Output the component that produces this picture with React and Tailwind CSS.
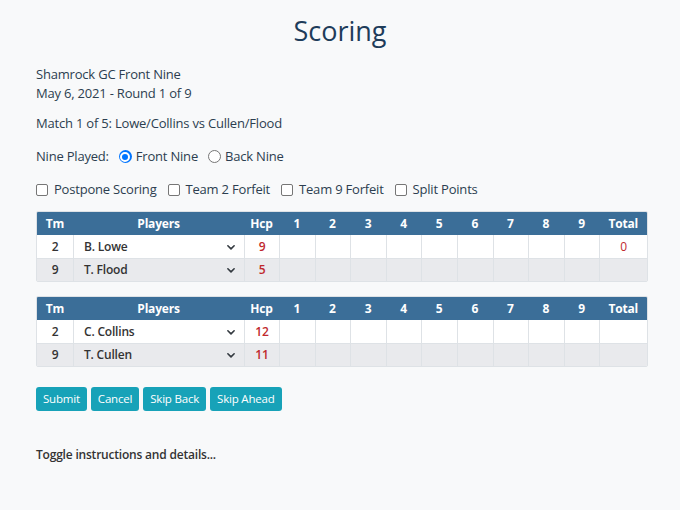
import React from 'react';

const holes = [1, 2, 3, 4, 5, 6, 7, 8, 9];

const matches = [
  [
    { tm: 2, name: 'B. Lowe', hcp: 9, total: '0' },
    { tm: 9, name: 'T. Flood', hcp: 5, total: '' },
  ],
  [
    { tm: 2, name: 'C. Collins', hcp: 12, total: '' },
    { tm: 9, name: 'T. Cullen', hcp: 11, total: '' },
  ],
];

const Chevron = () => (
  <svg width="10" height="10" viewBox="0 0 16 16" fill="none" stroke="#343a40" strokeWidth="2.6" strokeLinecap="round" strokeLinejoin="round">
    <path d="M3 6l5 5 5-5" />
  </svg>
);

const Checkbox = ({ label }) => (
  <label className="flex items-center gap-[6px]">
    <span className="w-[12px] h-[12px] rounded-[2px] border border-[#767676] bg-white" />
    <span>{label}</span>
  </label>
);

const Radio = ({ label, checked }) => (
  <label className="flex items-center gap-[4px]">
    {checked ? (
      <span className="w-[13px] h-[13px] rounded-full bg-[#0075ff] flex items-center justify-center">
        <span className="w-[10px] h-[10px] rounded-full bg-[#0075ff] border-[2px] border-white" />
      </span>
    ) : (
      <span className="w-[13px] h-[13px] rounded-full border border-[#767676] bg-white" />
    )}
    <span>{label}</span>
  </label>
);

const ScoreTable = ({ rows }) => (
  <div className="border border-[#dee2e6] rounded-[2px] overflow-hidden">
    <div className="grid grid-cols-[36px_171px_35px_repeat(9,35.6px)_1fr] bg-[#3b6e98] text-white font-bold text-[12px] h-[23px] items-center text-center">
      <div>Tm</div>
      <div>Players</div>
      <div>Hcp</div>
      {holes.map((h) => (
        <div key={h}>{h}</div>
      ))}
      <div>Total</div>
    </div>
    {rows.map((r, i) => (
      <div
        key={i}
        className={`grid grid-cols-[36px_171px_35px_repeat(9,35.6px)_1fr] h-[23px] text-[12px] text-center ${i === 0 ? 'bg-white' : 'bg-[#e9eaed] border-t border-[#dee2e6]'}`}
      >
        <div className="flex items-center justify-center text-[#333] font-semibold">{r.tm}</div>
        <div className="flex items-center justify-between pl-[10px] pr-[8px] border-l border-[#dee2e6] text-[#333] font-semibold">
          <span>{r.name}</span>
          <Chevron />
        </div>
        <div className="flex items-center justify-center border-l border-[#dee2e6] text-[#c0282d] font-semibold">{r.hcp}</div>
        {holes.map((h) => (
          <div key={h} className="border-l border-[#dee2e6]" />
        ))}
        <div className="flex items-center justify-center border-l border-[#dee2e6] text-[#c0282d]">{r.total}</div>
      </div>
    ))}
  </div>
);

export default function App() {
  return (
    <div className="min-h-[510px] bg-[#f8f9fa] text-[#2c3e50] font-['Open_Sans',sans-serif] text-[13px] tracking-[-0.2px] px-[36px] pt-[11px]">
      <h1 className="text-center text-[27px] text-[#1e3c5a] leading-[40px] tracking-[0px]">Scoring</h1>

      <div className="mt-[14px] leading-[19px]">
        <div>Shamrock GC Front Nine</div>
        <div>May 6, 2021 - Round 1 of 9</div>
      </div>

      <div className="mt-[11px] leading-[19px]">Match 1 of 5: Lowe/Collins vs Cullen/Flood</div>

      <div className="mt-[14px] flex items-center gap-[10px] leading-[19px]">
        <span>Nine Played:</span>
        <Radio label="Front Nine" checked />
        <Radio label="Back Nine" />
      </div>

      <div className="mt-[14px] flex items-center gap-[11px] leading-[19px]">
        <Checkbox label="Postpone Scoring" />
        <Checkbox label="Team 2 Forfeit" />
        <Checkbox label="Team 9 Forfeit" />
        <Checkbox label="Split Points" />
      </div>

      <div className="mt-[12px] w-[612px] flex flex-col gap-[14px]">
        {matches.map((rows, i) => (
          <ScoreTable key={i} rows={rows} />
        ))}
      </div>

      <div className="mt-[20px] flex gap-[4px]">
        {['Submit', 'Cancel', 'Skip Back', 'Skip Ahead'].map((b) => (
          <button key={b} className="bg-[#17a2b8] text-white text-[11.5px] h-[24px] px-[7px] rounded-[3px]">
            {b}
          </button>
        ))}
      </div>

      <div className="mt-[35px] text-[12px] font-semibold text-[#333]">Toggle instructions and details...</div>
    </div>
  );
}
